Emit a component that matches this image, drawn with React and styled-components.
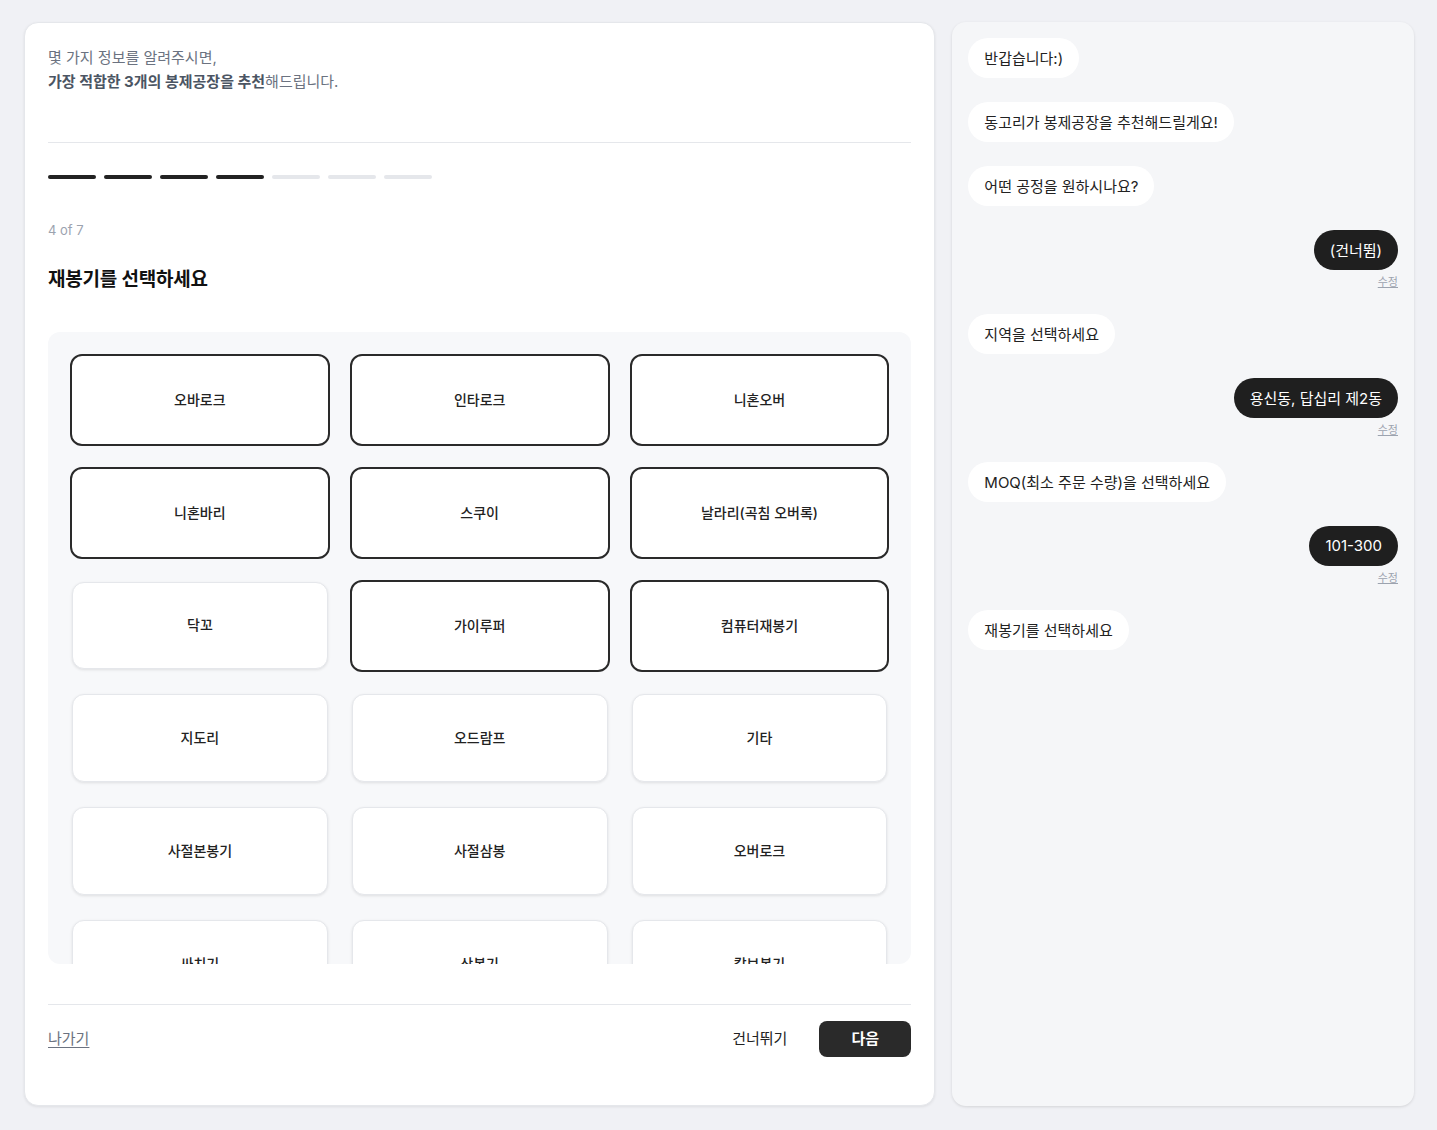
import React from "react";
import styled, { createGlobalStyle } from "styled-components";

const GlobalStyle = createGlobalStyle`
  * {
    box-sizing: border-box;
  }
  body {
    margin: 0;
    background: #f0f1f5;
    font-family: Inter, "Noto Sans CJK KR", sans-serif;
    color: #222;
  }
`;

const Page = styled.div`
  display: flex;
  gap: 17px;
  padding: 22px 23px 24px 24px;
  align-items: flex-start;
`;

const Card = styled.div`
  width: 912px;
  height: 1084px;
  background: #fff;
  border: 1px solid #e5e7eb;
  border-radius: 14px;
  box-shadow: 0 1px 3px rgba(0, 0, 0, 0.08);
  padding: 23px;
  display: flex;
  flex-direction: column;
`;

const Intro = styled.div`
  padding-bottom: 48px;
  border-bottom: 1px solid #e5e7eb;
  font-size: 15px;
  line-height: 24px;
  color: #6b7280;
  & b {
    color: #4b5563;
    font-weight: 700;
  }
`;

const Progress = styled.div`
  display: flex;
  gap: 8px;
  margin-top: 32px;
`;

const Segment = styled.div`
  width: 48px;
  height: 4px;
  border-radius: 2px;
  background: ${(p) => (p.$done ? "#222" : "#e5e7eb")};
`;

const StepCount = styled.div`
  margin-top: 41px;
  font-size: 13px;
  line-height: 20px;
  color: #9ca3af;
`;

const Title = styled.h2`
  margin: 26px 0 0;
  font-size: 19px;
  line-height: 28px;
  font-weight: 700;
  color: #111;
  letter-spacing: -0.2px;
`;

const OptionBox = styled.div`
  margin-top: 38px;
  height: 632px;
  background: #f7f8fa;
  border-radius: 12px;
  padding: 22px;
  overflow: hidden;
`;

const OptionGrid = styled.div`
  display: grid;
  grid-template-columns: repeat(3, 1fr);
  grid-auto-rows: 92.4px;
  column-gap: 20px;
  row-gap: 20.4px;
`;

const Option = styled.button`
  font-family: inherit;
  font-size: 14px;
  font-weight: 500;
  color: #222;
  background: #fff;
  cursor: pointer;
  border-radius: 12px;
  padding: 0 8px 2px;
  border: ${(p) => (p.$selected ? "2px solid #2a2a2a" : "1px solid #e5e7eb")};
  margin: ${(p) => (p.$selected ? "0" : "2px 2px 3px")};
  box-shadow: ${(p) =>
    p.$selected ? "none" : "0 1px 3px rgba(0, 0, 0, 0.1)"};
  display: flex;
  align-items: center;
  justify-content: center;
`;

const Footer = styled.div`
  margin-top: 40px;
  border-top: 1px solid #e5e7eb;
  padding-top: 16px;
  display: flex;
  align-items: center;
`;

const ExitLink = styled.a`
  font-size: 15px;
  line-height: 20px;
  color: #6b7280;
  text-decoration: underline;
  text-underline-offset: 3px;
  cursor: pointer;
`;

const Spacer = styled.div`
  flex: 1;
`;

const SkipButton = styled.button`
  font-family: inherit;
  font-size: 15px;
  color: #222;
  background: none;
  border: none;
  padding: 0 16px 3px;
  margin-right: 16px;
  cursor: pointer;
`;

const NextButton = styled.button`
  font-family: inherit;
  width: 92px;
  height: 36px;
  border: none;
  border-radius: 8px;
  background: #2a2a2a;
  color: #fff;
  font-size: 15px;
  font-weight: 700;
  padding: 0 0 3px;
  cursor: pointer;
`;

const ChatPanel = styled.div`
  width: 462px;
  height: 1084px;
  background: #f5f6f8;
  border-radius: 14px;
  box-shadow: 0 1px 3px rgba(0, 0, 0, 0.12);
  padding: 16px;
  display: flex;
  flex-direction: column;
  gap: 24px;
`;

const Message = styled.div`
  display: flex;
  flex-direction: column;
  align-items: ${(p) => (p.$user ? "flex-end" : "flex-start")};
`;

const Bubble = styled.div`
  height: 40px;
  border-radius: 20px;
  padding: 0 16px 2px;
  display: flex;
  align-items: center;
  font-size: 15px;
  background: ${(p) => (p.$user ? "#1f1f1f" : "#fff")};
  color: ${(p) => (p.$user ? "#fff" : "#222")};
`;

const EditLink = styled.a`
  margin-top: 4px;
  font-size: 11px;
  line-height: 16px;
  color: #9ca3af;
  text-decoration: underline;
  cursor: pointer;
`;

const options = [
  { label: "오바로크", selected: true },
  { label: "인타로크", selected: true },
  { label: "니혼오버", selected: true },
  { label: "니혼바리", selected: true },
  { label: "스쿠이", selected: true },
  { label: "날라리(곡침 오버록)", selected: true },
  { label: "닥꼬" },
  { label: "가이루퍼", selected: true },
  { label: "컴퓨터재봉기", selected: true },
  { label: "지도리" },
  { label: "오드람프" },
  { label: "기타" },
  { label: "사절본봉기" },
  { label: "사절삼봉" },
  { label: "오버로크" },
  { label: "싸치기" },
  { label: "삼봉기" },
  { label: "칼보봉기" },
];

const messages = [
  { text: "반갑습니다:)" },
  { text: "동고리가 봉제공장을 추천해드릴게요!" },
  { text: "어떤 공정을 원하시나요?" },
  { text: "(건너뜀)", user: true },
  { text: "지역을 선택하세요" },
  { text: "용신동, 답십리 제2동", user: true },
  { text: "MOQ(최소 주문 수량)을 선택하세요" },
  { text: "101-300", user: true },
  { text: "재봉기를 선택하세요" },
];

const App = () => {
  return (
    <>
      <GlobalStyle />
      <Page>
        <Card>
          <Intro>
            몇 가지 정보를 알려주시면,
            <br />
            <b>가장 적합한 3개의 봉제공장을 추천</b>해드립니다.
          </Intro>
          <Progress>
            {[0, 1, 2, 3, 4, 5, 6].map((i) => (
              <Segment key={i} $done={i < 4} />
            ))}
          </Progress>
          <StepCount>4 of 7</StepCount>
          <Title>재봉기를 선택하세요</Title>
          <OptionBox>
            <OptionGrid>
              {options.map((o) => (
                <Option key={o.label} $selected={o.selected}>
                  {o.label}
                </Option>
              ))}
            </OptionGrid>
          </OptionBox>
          <Footer>
            <ExitLink>나가기</ExitLink>
            <Spacer />
            <SkipButton>건너뛰기</SkipButton>
            <NextButton>다음</NextButton>
          </Footer>
        </Card>
        <ChatPanel>
          {messages.map((m, i) => (
            <Message key={i} $user={m.user}>
              <Bubble $user={m.user}>{m.text}</Bubble>
              {m.user && <EditLink>수정</EditLink>}
            </Message>
          ))}
        </ChatPanel>
      </Page>
    </>
  );
};

export default App;
